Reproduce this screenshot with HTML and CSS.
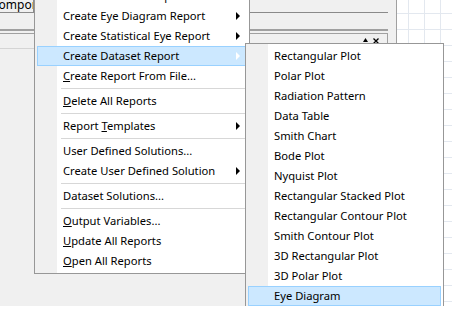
FILE: index.html
```html
<!DOCTYPE html>
<html lang="en">
<head>
    <meta charset="UTF-8">
    <title>Results Menu</title>
    <link rel="stylesheet" href="styles.css">
</head>
<body>

    <div class="screen">
        <div class="workspace">
            <div class="project">
                <div class="pane">
                    <div class="tabs">
                        <div class="tab">Components</div>
                    </div>
                    <div class="rule-double"></div>
                    <div class="pane-head">
                        <span class="pane-btn">
                            <svg width="5" height="4" viewBox="0 0 5 4"><path d="M0 4 L2.5 0 L5 4 Z" fill="#000"/></svg>
                        </span>
                        <span class="pane-btn">
                            <svg width="6" height="6" viewBox="0 0 6 6"><path d="M0.5 0.5 L5.5 5.5 M5.5 0.5 L0.5 5.5" stroke="#000" stroke-width="1.3"/></svg>
                        </span>
                    </div>
                </div>
            </div>
            <div class="plot"></div>
        </div>

        <!-- Results menu -->
        <div class="menu main-menu">
            <div class="item has-sub">Create Standard Report</div>
            <div class="item has-sub">Create Eye Diagram Report</div>
            <div class="item has-sub">Create Statistical Eye Report</div>
            <div class="item has-sub hot">Create Dataset Report</div>
            <div class="item"><u>C</u>reate Report From File...</div>
            <div class="sep"></div>
            <div class="item"><u>D</u>elete All Reports</div>
            <div class="sep"></div>
            <div class="item has-sub">Report <u>T</u>emplates</div>
            <div class="sep"></div>
            <div class="item">User Defined Solutions...</div>
            <div class="item has-sub">Create User Defined Solution</div>
            <div class="sep"></div>
            <div class="item">Dataset Solutions...</div>
            <div class="sep"></div>
            <div class="item"><u>O</u>utput Variables...</div>
            <div class="item"><u>U</u>pdate All Reports</div>
            <div class="item"><u>O</u>pen All Reports</div>
        </div>

        <!-- Dataset report submenu -->
        <div class="menu sub-menu">
            <div class="item">Rectangular Plot</div>
            <div class="item">Polar Plot</div>
            <div class="item">Radiation Pattern</div>
            <div class="item">Data Table</div>
            <div class="item">Smith Chart</div>
            <div class="item">Bode Plot</div>
            <div class="item">Nyquist Plot</div>
            <div class="item">Rectangular Stacked Plot</div>
            <div class="item">Rectangular Contour Plot</div>
            <div class="item">Smith Contour Plot</div>
            <div class="item">3D Rectangular Plot</div>
            <div class="item">3D Polar Plot</div>
            <div class="item hot">Eye Diagram</div>
        </div>
    </div>

</body>
</html>
```

FILE: styles.css
```css
body {
    margin: 0;
    background-color: #ffffff;
    font-family: "Noto Sans", "Open Sans", sans-serif;
}
.screen {
    position: relative;
    width: 452px;
    height: 306px;
    overflow: hidden;
    background-color: #f0f0f0;
}
.workspace {
    display: flex;
    height: 100%;
}
.project {
    width: 396px;
    border-right: 1px solid #a0a0a0;
}
.pane {
    margin-right: 8px;
}
.tabs {
    height: 12px;
    border-bottom: 1px solid #8a8a8a;
    display: flex;
}
.tab {
    width: 33px;
    height: 12px;
    border-right: 1px solid #8a8a8a;
    overflow: hidden;
    font-size: 12px;
    line-height: 9px;
    text-indent: -9px;
    white-space: nowrap;
    color: #000;
}
.rule-double {
    margin-top: 16px;
    height: 2px;
    border-top: 2px solid #a0a0a0;
    border-bottom: 1px solid #a0a0a0;
}
.pane-head {
    height: 15px;
    border-bottom: 1px solid #d4d4d4;
    border-right: 1px solid #a0a0a0;
    display: flex;
    justify-content: flex-end;
    align-items: flex-start;
    gap: 5px;
    padding-right: 8px;
    padding-top: 4px;
    box-sizing: border-box;
}
.pane-btn {
    display: flex;
}
.plot {
    flex: 1;
    background-color: #ffffff;
    background-image:
        linear-gradient(to right, #e3e8ef 1px, transparent 1px),
        linear-gradient(to bottom, #e3e8ef 1px, transparent 1px);
    background-size: 16px 16px;
    background-position: 11px 13px;
}

/* menus */
.menu {
    position: absolute;
    border: 1px solid #979797;
    padding: 2px;
    background-color: #ffffff;
    background-image: linear-gradient(to right, #f0f0f0 22px, transparent 22px);
    font-size: 11.2px;
    color: #000;
}
.main-menu {
    left: 34px;
    top: -17px;
    width: 210px;
}
.sub-menu {
    left: 245px;
    top: 43px;
    width: 193px;
}
.item {
    position: relative;
    height: 20px;
    line-height: 20px;
    padding-left: 26px;
    white-space: nowrap;
    box-sizing: border-box;
}
.item.hot {
    background-color: #cce8ff;
    outline: 1px solid #99d1ff;
    outline-offset: -1px;
}
.item.has-sub::after {
    content: "";
    position: absolute;
    right: 7px;
    top: 6px;
    border-left: 4px solid #000;
    border-top: 4px solid transparent;
    border-bottom: 4px solid transparent;
}
.item.hot.has-sub::after {
    border-left-color: #ffffff;
}
.sep {
    height: 1px;
    margin: 2px 1px 2px 24px;
    background-color: #d7d7d7;
}
```
